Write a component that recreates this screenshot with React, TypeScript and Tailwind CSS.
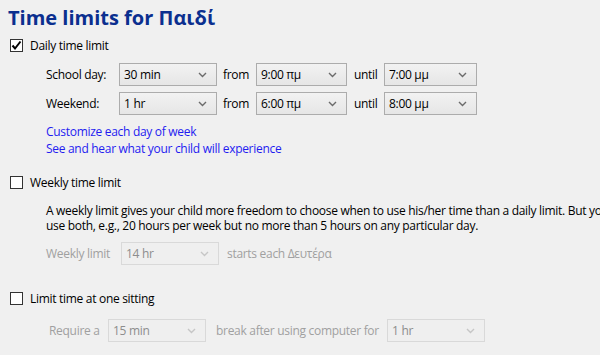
import React from 'react';

const Chevron: React.FC<{ disabled?: boolean }> = ({ disabled }) => (
  <svg width="9" height="6" viewBox="0 0 9 6" className="shrink-0">
    <polyline
      points="1,1 4.5,4.5 8,1"
      fill="none"
      stroke={disabled ? '#c6c6c6' : '#6b6b6b'}
      strokeWidth="1.4"
    />
  </svg>
);

const Select: React.FC<{ value: string; w: string; disabled?: boolean }> = ({ value, w, disabled }) => (
  <div
    className={
      'h-[23px] flex items-center justify-between pl-[4px] pr-[9px] border ' +
      w +
      (disabled
        ? ' border-[#d9d9d9] bg-[#efefef] text-[#8d8d8d]'
        : ' border-[#acacac] bg-gradient-to-b from-[#f2f2f2] to-[#e6e6e6] text-black')
    }
  >
    <span>{value}</span>
    <Chevron disabled={disabled} />
  </div>
);

const Check: React.FC<{ checked?: boolean; label: string }> = ({ checked, label }) => (
  <div className="h-[18px] flex items-center pl-[10px]">
    <div className="w-[13px] h-[13px] border border-[#333] bg-white flex items-center justify-center">
      {checked && (
        <svg width="11" height="11" viewBox="0 0 11 11">
          <polyline points="1.5,5.5 4,8.5 9.5,1.5" fill="none" stroke="#000" strokeWidth="2" />
        </svg>
      )}
    </div>
    <span className="ml-[7px]">{label}</span>
  </div>
);

const TimeRow: React.FC<{ label: string; amount: string; from: string; until: string }> = ({ label, amount, from, until }) => (
  <div className="flex items-center pl-[46px]">
    <span className="w-[73px]">{label}</span>
    <Select value={amount} w="w-[98px]" />
    <span className="w-[39px] pl-[6px]">from</span>
    <Select value={from} w="w-[91px]" />
    <span className="w-[37px] pl-[7px]">until</span>
    <Select value={until} w="w-[93px]" />
  </div>
);

export default function App() {
  return (
    <div className="w-[600px] h-[355px] overflow-hidden bg-[#f0f0f0] text-[12px] leading-[15px] text-black font-['Open_Sans','Noto_Sans',sans-serif] tracking-[-0.3px]">
      <h1 className="pl-[8px] pt-[5px] h-[32px] text-[20px] leading-[26px] font-bold text-[#0b2f8f] tracking-normal">
        Time limits for Παιδί
      </h1>

      <div className="mt-[4px]">
        <Check checked label="Daily time limit" />
      </div>

      <div className="mt-[9px] flex flex-col gap-[6px]">
        <TimeRow label="School day:" amount="30 min" from="9:00 πμ" until="7:00 μμ" />
        <TimeRow label="Weekend:" amount="1 hr" from="6:00 πμ" until="8:00 μμ" />
      </div>

      <div className="mt-[8px] pl-[46px] flex flex-col text-[#1f1cf0] leading-[17px]">
        <span>Customize each day of week</span>
        <span>See and hear what your child will experience</span>
      </div>

      <div className="mt-[16px]">
        <Check label="Weekly time limit" />
      </div>

      <p className="mt-[12px] pl-[46px] whitespace-nowrap">
        A weekly limit gives your child more freedom to choose when to use his/her time than a daily limit. But you can
        <br />
        use both, e.g., 20 hours per week but no more than 5 hours on any particular day.
      </p>

      <div className="mt-[9px] pl-[46px] flex items-center text-[#a0a0a0]">
        <span className="w-[75px]">Weekly limit</span>
        <Select value="14 hr" w="w-[98px]" disabled />
        <span className="ml-[8px]">starts each Δευτέρα</span>
      </div>

      <div className="mt-[24px]">
        <Check label="Limit time at one sitting" />
      </div>

      <div className="mt-[12px] pl-[49px] flex items-center text-[#a0a0a0]">
        <span className="w-[59px]">Require a</span>
        <Select value="15 min" w="w-[98px]" disabled />
        <span className="w-[181px] pl-[10px]">break after using computer for</span>
        <Select value="1 hr" w="w-[98px]" disabled />
      </div>
    </div>
  );
}
